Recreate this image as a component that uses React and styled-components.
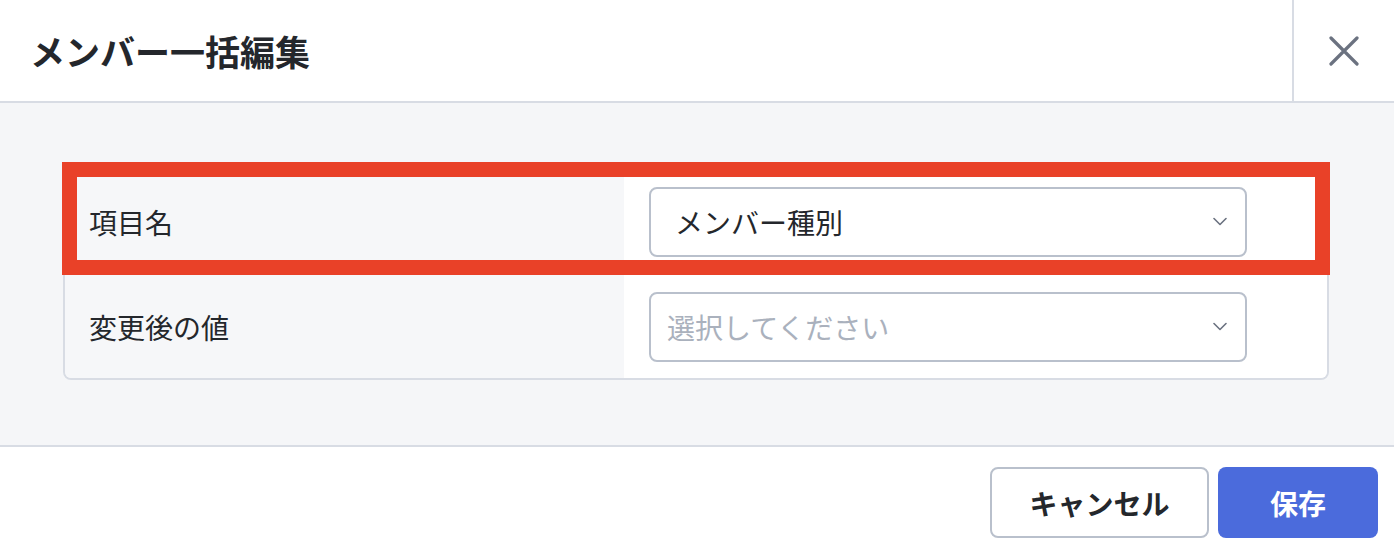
import React from 'react';
import styled, { createGlobalStyle } from 'styled-components';

const GlobalStyle = createGlobalStyle`
  html, body {
    margin: 0;
    padding: 0;
    background: #ffffff;
    font-family: "Noto Sans CJK JP", "Noto Sans", sans-serif;
    color: #24272c;
  }
`;

const Dialog = styled.div`
  width: 1394px;
  height: 552px;
  display: flex;
  flex-direction: column;
  background: #ffffff;
`;

const Header = styled.header`
  height: 101px;
  flex-shrink: 0;
  display: flex;
  align-items: stretch;
  border-bottom: 2px solid #d8dce4;
`;

const Title = styled.h1`
  flex: 1;
  margin: 0;
  padding-left: 30px;
  display: flex;
  align-items: center;
  font-size: 35px;
  font-weight: 700;
  color: #24272c;
`;

const CloseButton = styled.button`
  width: 102px;
  border: none;
  border-left: 2px solid #d8dce4;
  background: transparent;
  display: flex;
  align-items: center;
  justify-content: center;
  padding: 0;
  cursor: pointer;
`;

const Body = styled.div`
  height: 344px;
  flex-shrink: 0;
  box-sizing: border-box;
  background: #f5f6f8;
  padding: 65px 65px 0 63px;
  border-bottom: 2px solid #d8dce4;
`;

const Table = styled.div`
  position: relative;
  border: 2px solid #d8dce4;
  border-radius: 8px;
`;

const Row = styled.div`
  display: grid;
  grid-template-columns: 559px 1fr;
  height: 103px;
  border-top: ${p => (p.$first ? 'none' : '2px solid #d8dce4')};
`;

const Label = styled.div`
  display: flex;
  align-items: center;
  padding-left: 24px;
  font-size: 28px;
  color: #24272c;
  background: #f6f7f9;
  border-radius: ${p => (p.$last ? '0 0 0 6px' : '6px 0 0 0')};
`;

const Cell = styled.div`
  display: flex;
  align-items: center;
  padding-left: 25px;
  background: #ffffff;
  border-radius: ${p => (p.$last ? '0 0 6px 0' : '0 6px 0 0')};
`;

const Select = styled.div`
  width: 598px;
  height: 70px;
  box-sizing: border-box;
  border: 2px solid #b9c0cc;
  border-radius: 8px;
  background: #ffffff;
  display: flex;
  align-items: center;
  justify-content: space-between;
  padding: 0 18px 0 ${p => (p.$placeholder ? '16px' : '24px')};
  font-size: 28px;
  color: ${p => (p.$placeholder ? '#aab1bd' : '#24272c')};
`;

/* red marker frame drawn over the first row */
const Highlight = styled.div`
  position: absolute;
  top: -8px;
  left: -3px;
  right: -3px;
  height: 113px;
  box-sizing: border-box;
  border: 15px solid #e94128;
  pointer-events: none;
`;

const Footer = styled.footer`
  flex: 1;
  display: flex;
  align-items: flex-start;
  justify-content: flex-end;
  gap: 9px;
  padding: 20px 16px 0 0;
`;

const Button = styled.button`
  height: 71px;
  padding: 0;
  width: ${p => (p.$primary ? '160px' : '219px')};
  border-radius: 8px;
  font-family: inherit;
  font-size: 28px;
  font-weight: 700;
  border: ${p => (p.$primary ? 'none' : '2px solid #b9c0cc')};
  background: ${p => (p.$primary ? '#4b6bdc' : '#ffffff')};
  color: ${p => (p.$primary ? '#ffffff' : '#24272c')};
  cursor: pointer;
`;

const Chevron = () => (
  <svg width="14" height="9" viewBox="0 0 14 9" fill="none">
    <path d="M1 1.5l6 6 6-6" stroke="#6b7280" strokeWidth="1.6" strokeLinecap="round" strokeLinejoin="round" />
  </svg>
);

const CloseIcon = () => (
  <svg width="30" height="30" viewBox="0 0 30 30" fill="none">
    <path d="M2 2l26 26M28 2L2 28" stroke="#6b7280" strokeWidth="3.2" strokeLinecap="round" />
  </svg>
);

export default function App() {
  return (
    <>
      <GlobalStyle />
      <Dialog>
        <Header>
          <Title>メンバー一括編集</Title>
          <CloseButton aria-label="閉じる">
            <CloseIcon />
          </CloseButton>
        </Header>
        <Body>
          <Table>
            <Row $first>
              <Label>項目名</Label>
              <Cell>
                <Select>
                  <span>メンバー種別</span>
                  <Chevron />
                </Select>
              </Cell>
            </Row>
            <Row>
              <Label $last>変更後の値</Label>
              <Cell $last>
                <Select $placeholder>
                  <span>選択してください</span>
                  <Chevron />
                </Select>
              </Cell>
            </Row>
            <Highlight />
          </Table>
        </Body>
        <Footer>
          <Button>キャンセル</Button>
          <Button $primary>保存</Button>
        </Footer>
      </Dialog>
    </>
  );
}
